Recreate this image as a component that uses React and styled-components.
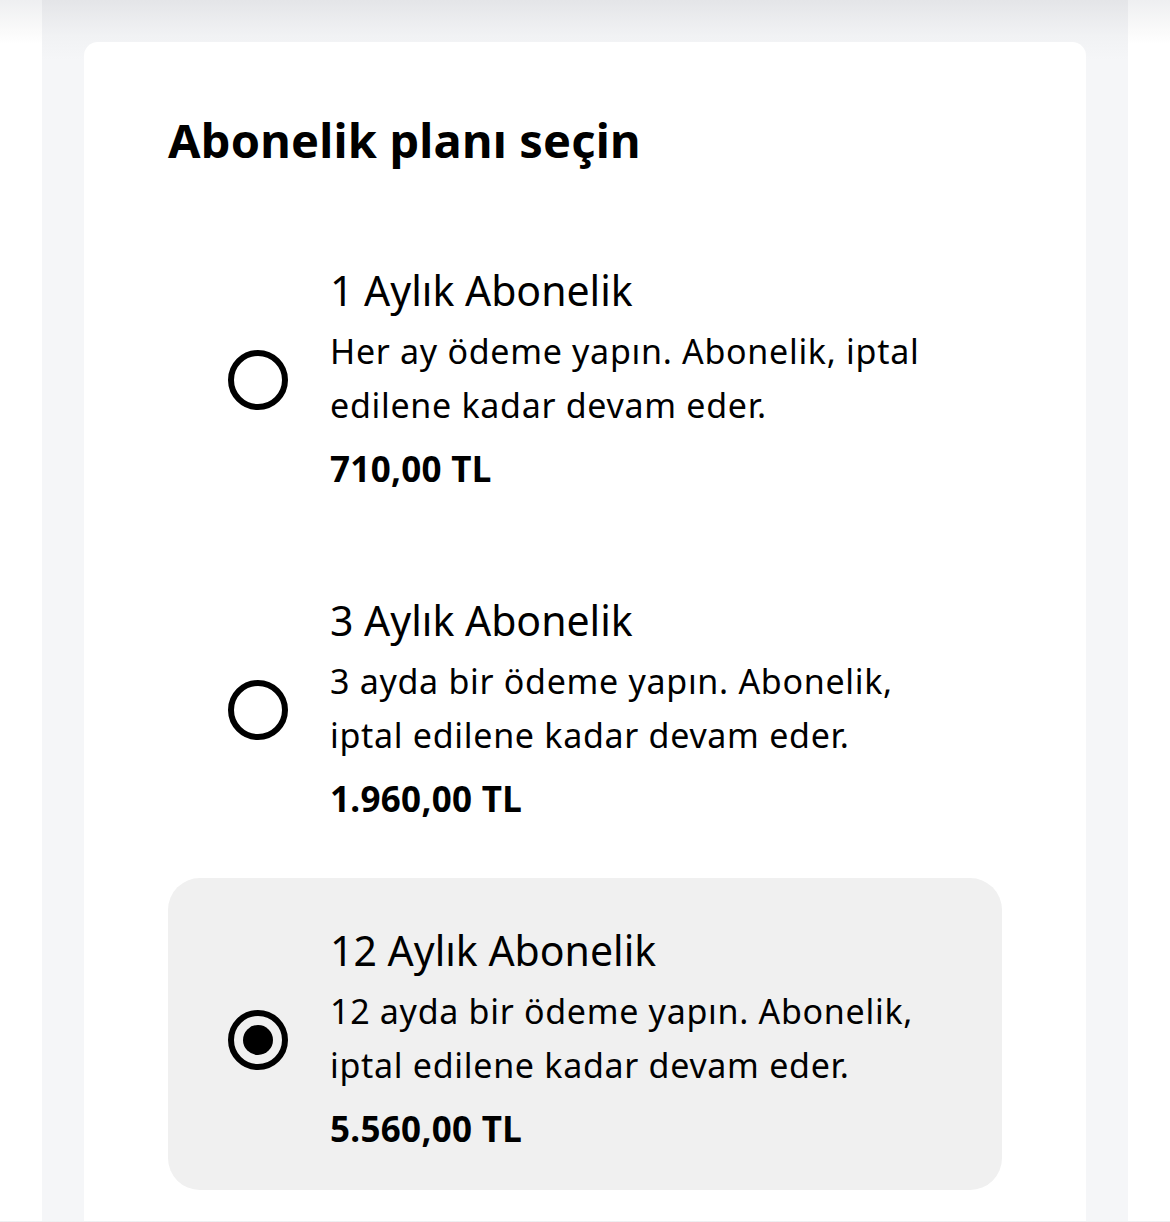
import React, { useState } from "react";
import styled, { createGlobalStyle } from "styled-components";

const GlobalStyle = createGlobalStyle`
  html, body {
    margin: 0;
    padding: 0;
  }
  body {
    background: linear-gradient(to bottom, #eeeff1 0, #fafafa 30px, #ffffff 44px);
    font-family: "Noto Sans", "Open Sans", sans-serif;
    color: #000;
  }
`;

const plans = [
  {
    id: "1m",
    title: "1 Aylık Abonelik",
    lines: ["Her ay ödeme yapın. Abonelik, iptal", "edilene kadar devam eder."],
    price: "710,00 TL",
  },
  {
    id: "3m",
    title: "3 Aylık Abonelik",
    lines: ["3 ayda bir ödeme yapın. Abonelik,", "iptal edilene kadar devam eder."],
    price: "1.960,00 TL",
  },
  {
    id: "12m",
    title: "12 Aylık Abonelik",
    lines: ["12 ayda bir ödeme yapın. Abonelik,", "iptal edilene kadar devam eder."],
    price: "5.560,00 TL",
  },
];

export default function App() {
  const [selected, setSelected] = useState("12m");
  return (
    <>
      <GlobalStyle />
      <Frame>
        <Card>
          <Heading>Abonelik planı seçin</Heading>
          <PlanList>
            {plans.map((plan) => (
              <Plan
                key={plan.id}
                $active={selected === plan.id}
                onClick={() => setSelected(plan.id)}
              >
                <Radio $checked={selected === plan.id} />
                <Info>
                  <PlanTitle>{plan.title}</PlanTitle>
                  <Description>
                    {plan.lines.map((line) => (
                      <span key={line}>{line}</span>
                    ))}
                  </Description>
                  <Price>{plan.price}</Price>
                </Info>
              </Plan>
            ))}
          </PlanList>
        </Card>
      </Frame>
    </>
  );
}

const Frame = styled.div`
  margin: 0 42px;
  height: 1221px;
  overflow: hidden;
  box-sizing: border-box;
  padding: 42px 42px 0;
  background: linear-gradient(to bottom, #e4e5e8 0, #f1f2f4 36px, #f5f6f8 60px);
`;

const Card = styled.div`
  background: #ffffff;
  border-radius: 14px 14px 0 0;
  min-height: 1180px;
  padding: 66px 84px 0;
`;

const Heading = styled.h1`
  margin: 0;
  font-size: 47px;
  line-height: 64px;
  font-weight: 700;
  letter-spacing: 0.2px;
`;

const PlanList = styled.div`
  display: flex;
  flex-direction: column;
  gap: 18px;
  margin-top: 46px;
`;

const Plan = styled.div`
  display: flex;
  align-items: center;
  gap: 42px;
  height: 312px;
  box-sizing: border-box;
  padding: 8px 60px 0;
  border-radius: 32px;
  background: ${(p) => (p.$active ? "#f0f0f0" : "transparent")};
  cursor: pointer;
`;

const Radio = styled.span`
  position: relative;
  flex: 0 0 auto;
  width: 60px;
  height: 60px;
  box-sizing: border-box;
  border: 6px solid #000;
  border-radius: 50%;
  margin-top: 4px;
  &::after {
    content: "";
    display: ${(p) => (p.$checked ? "block" : "none")};
    position: absolute;
    top: 9px;
    left: 9px;
    width: 30px;
    height: 30px;
    border-radius: 50%;
    background: #000;
  }
`;

const Info = styled.div`
  display: flex;
  flex-direction: column;
`;

const PlanTitle = styled.div`
  font-size: 41px;
  line-height: 60px;
  font-weight: 400;
`;

const Description = styled.div`
  display: flex;
  flex-direction: column;
  margin-top: 4px;
  font-size: 34px;
  line-height: 54px;
  font-weight: 400;
  letter-spacing: 0.7px;
`;

const Price = styled.div`
  margin-top: 10px;
  font-size: 35px;
  line-height: 54px;
  font-weight: 700;
  letter-spacing: 0.3px;
`;
